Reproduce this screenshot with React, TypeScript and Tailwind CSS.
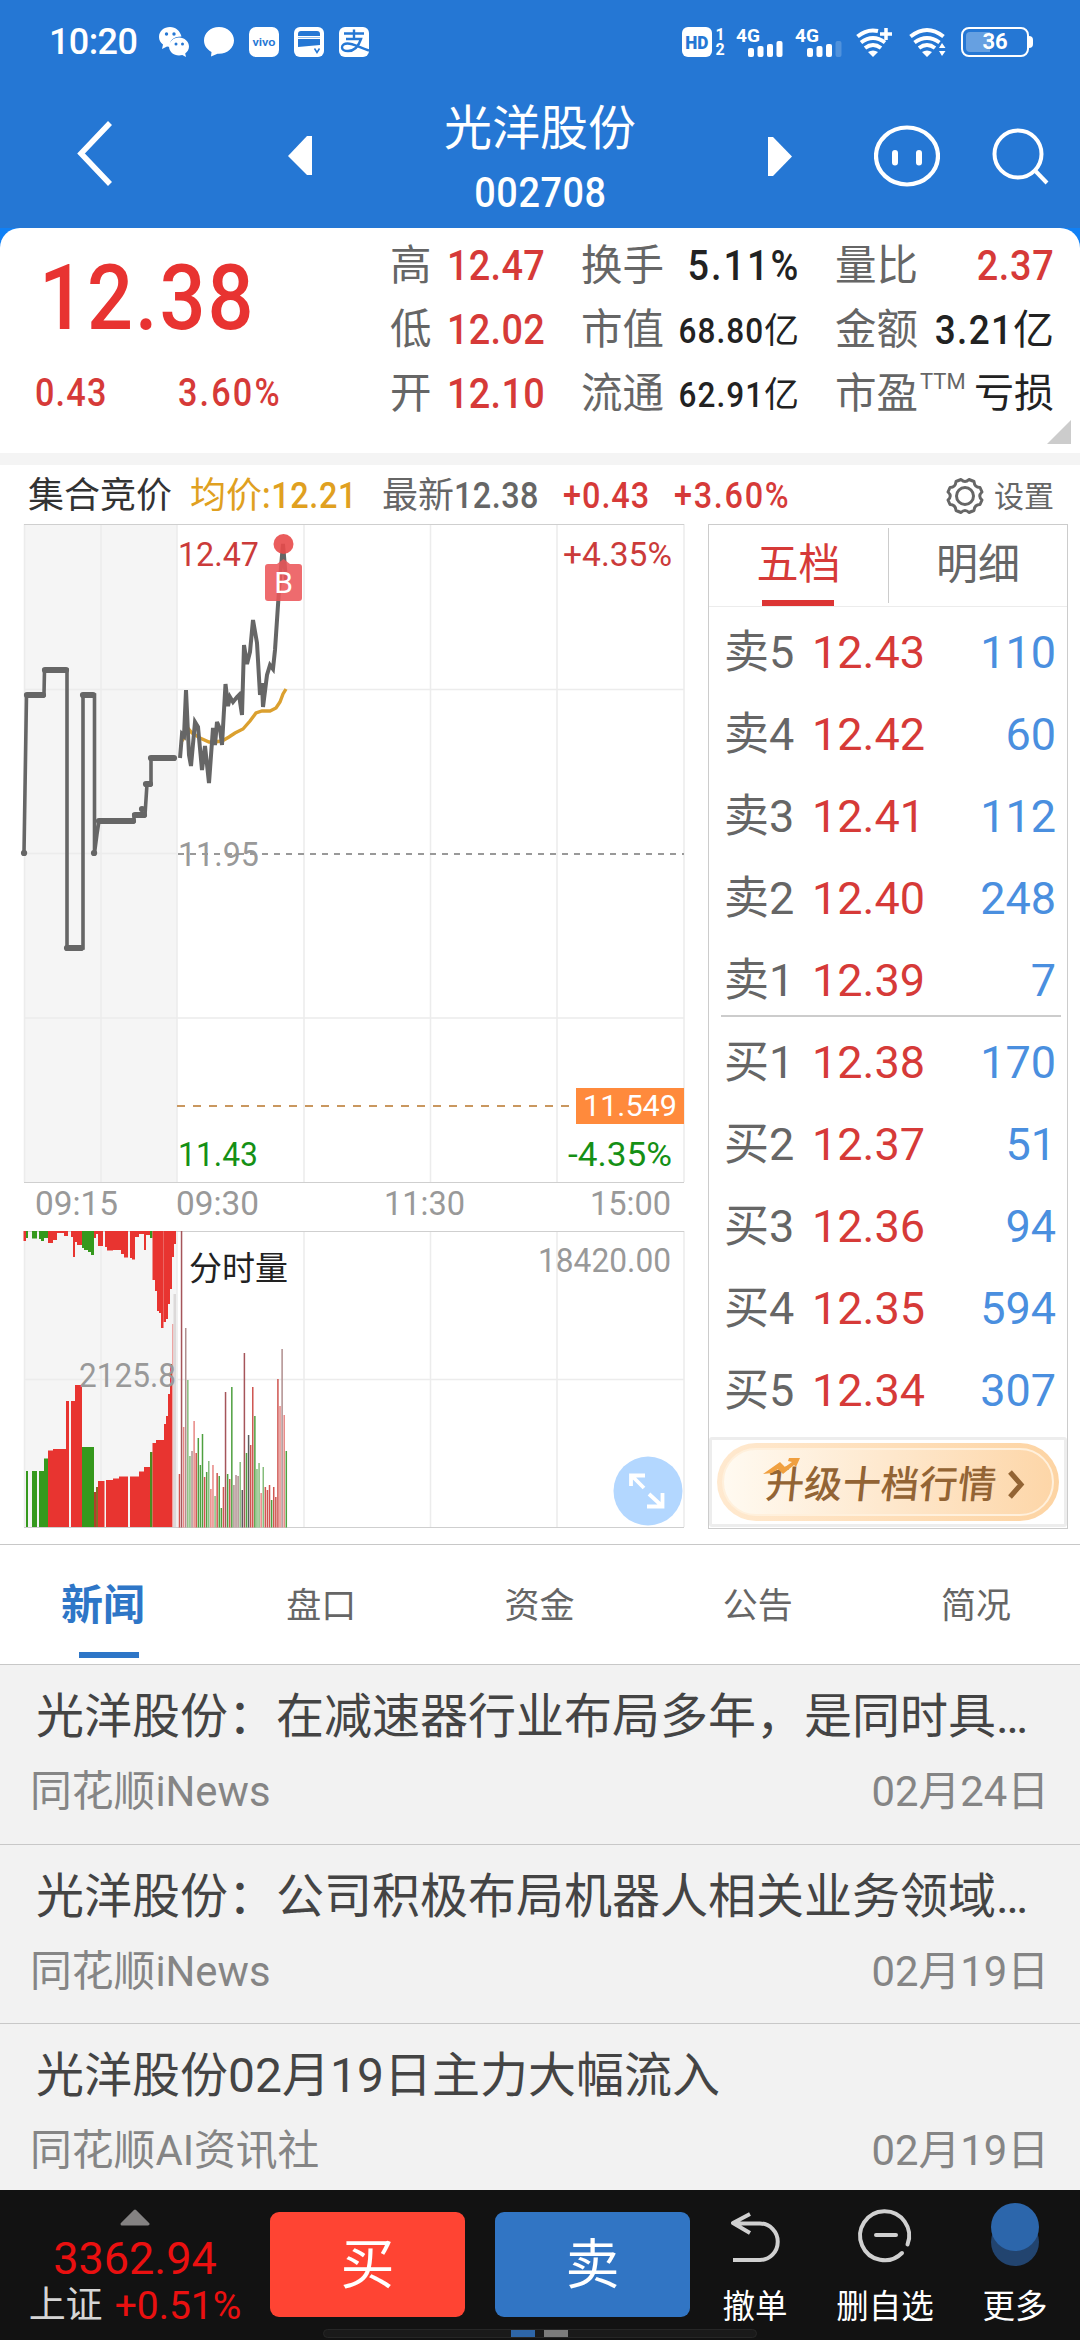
import { ReactNode } from "react";

const RED = "#e83430";
const GREEN = "#35991d";

const asks = [
    ["卖5", "12.43", "110"],
    ["卖4", "12.42", "60"],
    ["卖3", "12.41", "112"],
    ["卖2", "12.40", "248"],
    ["卖1", "12.39", "7"],
];

const bids = [
    ["买1", "12.38", "170"],
    ["买2", "12.37", "51"],
    ["买3", "12.36", "94"],
    ["买4", "12.35", "594"],
    ["买5", "12.34", "307"],
];

const news = [
    { title: "光洋股份：在减速器行业布局多年，是同时具…", source: "同花顺iNews", date: "02月24日" },
    { title: "光洋股份：公司积极布局机器人相关业务领域…", source: "同花顺iNews", date: "02月19日" },
    { title: "光洋股份02月19日主力大幅流入", source: "同花顺AI资讯社", date: "02月19日" },
];

// [x start, x end, y, colour]
type Bar = [number, number, number, string];

// matched volume during the call auction, grows from the bottom
const auctionMatched: Bar[] = [
    [26, 28, 1471, GREEN], [32, 37, 1471, GREEN], [39, 44, 1471, GREEN], [44, 48, 1458.5, GREEN],
    [48, 53, 1450.5, RED], [53, 66, 1449, RED], [66, 69, 1401, RED], [71, 75, 1401, RED], [75, 82, 1385, RED],
    [82, 94, 1447, GREEN], [94, 96, 1492, "#b0402a"], [96, 98, 1487, "#8a6a28"],
    [98, 104.5, 1481, RED], [106, 113, 1480, RED], [113, 119, 1478.5, RED], [119, 128, 1476.5, RED],
    [130, 139, 1476.5, RED], [139, 144, 1471.5, RED], [144, 150, 1467, RED], [150, 152.5, 1452, "#4d8a20"],
    [152.5, 156, 1443, RED], [156, 164, 1440, RED], [164, 166, 1424, RED], [166, 168, 1416, RED],
    [168, 170, 1394, RED], [170, 172, 1364, RED], [172, 173.5, 1324, "#eda5a3"], [173.5, 176, 1294, "#dcd9d9"],
];

// unmatched volume during the call auction, hangs from the top
const auctionUnmatched: Bar[] = [
    [23.5, 26, 1241, RED], [26, 28, 1238, GREEN], [32, 37, 1238.5, GREEN], [39, 41, 1239, GREEN],
    [41, 44, 1241, GREEN], [44, 48, 1238, GREEN], [48, 53, 1243, RED], [53, 57, 1240, RED], [57, 64, 1233, RED],
    [64, 68, 1236, RED], [71, 73, 1237, RED], [73, 75, 1257, RED], [75, 77, 1242, RED], [77, 82, 1245, RED],
    [82, 84, 1248, GREEN], [84, 88, 1250, GREEN], [88, 91, 1252, GREEN], [91, 94, 1255, GREEN],
    [94, 96, 1238, RED], [96, 98, 1234, RED], [98, 103, 1246, RED], [105, 107, 1247, RED], [107, 113, 1250.5, RED],
    [113, 121, 1250, RED], [121, 124, 1254, RED], [124, 128, 1257.5, RED], [130, 132, 1258, RED],
    [132, 135, 1259.5, RED], [135, 139, 1237, RED], [139, 144, 1234, RED], [144, 146, 1250, RED],
    [146, 150, 1235, RED], [150, 152.5, 1238, GREEN], [152.5, 155, 1280, RED], [155, 157, 1291, RED],
    [157, 159, 1311, RED], [159, 161, 1313, RED], [161, 163.5, 1328, RED], [163.5, 166, 1322, RED],
    [166, 168, 1319, RED], [168, 170, 1304, RED], [170, 172, 1289, RED], [172, 174, 1257, RED], [174, 176, 1244, RED],
];

const toneColors: Record<string, string> = {
    r: "#cf5550",
    d: "#a5555a",
    p: "#e88784",
    g: "#4fa040",
    l: "#86bd7c",
    s: "#b08f8f",
    k: "#5c5c5c",
};

// one bar per minute of the session: top edge and tone
const sessionVolume: [number, string][] = [
    [1474, "r"], [1231, "d"], [1427, "p"], [1328, "s"], [1380, "l"], [1456, "l"], [1451, "s"], [1421, "p"],
    [1453, "r"], [1438, "g"], [1465, "g"], [1434, "g"], [1477, "r"], [1472, "g"], [1461, "l"], [1489, "p"],
    [1465, "p"], [1496, "l"], [1473, "r"], [1476, "g"], [1508, "g"], [1487, "r"], [1392, "d"], [1474, "g"],
    [1479, "r"], [1387, "g"], [1485, "s"], [1475, "s"], [1476, "s"], [1462, "l"], [1490, "k"], [1353, "d"],
    [1453, "g"], [1435, "k"], [1445, "r"], [1387, "r"], [1416, "g"], [1469, "l"], [1463, "l"], [1493, "p"],
    [1467, "l"], [1487, "r"], [1490, "r"], [1485, "r"], [1500, "g"], [1487, "r"], [1497, "r"], [1379, "r"],
    [1406, "p"], [1349, "s"], [1415, "p"], [1451, "g"],
];

// narrow, widely spaced figures
function Num({ className = "", children }: { className?: string; children: ReactNode }) {
    return <span className={`inline-block scale-x-90 font-medium ${className}`}>{children}</span>;
}

function StatusBar() {
    return (
        <div className="flex h-[84px] items-center justify-between pl-[49px] pr-[47px] text-white">
            <div className="flex items-center gap-[15px]">
                <span className="mr-[6px] w-[89px] text-[36px] font-medium leading-none tracking-[-0.6px]">10:20</span>
                <svg width="30" height="30" viewBox="0 0 30 30" fill="#fff">
                    <path d="M11 0C5 0 0 4 0 10c0 3 1.500 5.500 4 7.500L3 22l5-2.500 3 .5C10 14 14 9.500 22.500 9.500 21 4 17 0 11 0z" />
                    <path d="M20 10.500c-5.500 0-10 4-10 9s4.500 9 10 9c1.200 0 2.300-.2 3.300-.5L27 30l-.8-3.500c2.300-1.700 3.800-4.200 3.800-7 0-5-4.500-9-10-9z" />
                    <g fill="#2577d4">
                        <circle cx="7.500" cy="7" r="1.700" />
                        <circle cx="15" cy="7" r="1.700" />
                        <circle cx="17" cy="17" r="1.500" />
                        <circle cx="23.500" cy="17" r="1.500" />
                    </g>
                </svg>
                <svg width="30" height="30" viewBox="0 0 30 30" fill="#fff">
                    <path d="M15 0C6.500 0 0 6 0 13.500c0 5 3 9 7.500 11.500L7 29.500l6.500-2.700C23 27.500 30 21 30 13.500S23.500 0 15 0z" />
                </svg>
                <div className="flex h-[30px] w-[30px] items-center justify-center rounded-[7px] bg-white text-[11px] font-semibold leading-none text-[#2577d4]">
                    <span className="scale-x-115">vivo</span>
                </div>
                <svg width="30" height="30" viewBox="0 0 30 30">
                    <rect width="30" height="30" rx="6" fill="#fff" />
                    <path d="M4 9V7q0-3 3-3h16q3 0 3 3v2z" fill="#2577d4" />
                    <path d="M4 12h22v6L4 20z" fill="#2577d4" />
                    <path d="M4 10.500h22" stroke="#9dc3ec" />
                    <path d="M20.500 21.500l2.500 4 2.500-4" fill="none" stroke="#2577d4" strokeWidth="1.500" />
                </svg>
                <svg width="30" height="30" viewBox="0 0 30 30" fill="none" stroke="#2577d4">
                    <rect width="30" height="30" rx="6" fill="#fff" stroke="none" />
                    <path d="M5 6.500h20M15 2.500v9M7 12h15c-2 6-6 12-13 12-4 0-6-1.500-6-3.500 0-2.500 2.500-4 5.500-4 5 0 9 2.500 21.500 7" strokeWidth="2.400" />
                </svg>
            </div>
            <div className="flex items-center">
                <div className="flex h-[30px] w-[30px] items-center justify-center rounded-[6px] bg-white text-[19px] font-black leading-none text-[#2577d4]">
                    <span className="scale-x-90">HD</span>
                </div>
                <div className="ml-[3px] flex w-[10px] flex-col items-center text-[16px] font-bold leading-[15px]">
                    <span>1</span>
                    <span>2</span>
                </div>
                <Signal last={1} />
                <Signal last={0.2} />
                <svg className="ml-[13px]" width="36" height="30" viewBox="0 0 36 30" fill="none" stroke="#fff" strokeWidth="4">
                    <path d="M1.500 9.500Q11 1.500 22 4M5 15.500q12-9 24 0M9 21q8-6 16 0" />
                    <path d="M30 1v12M24 7h12" strokeWidth="3.500" />
                    <path d="M12 25q5-3 10 0l-5 5z" fill="#fff" stroke="none" />
                </svg>
                <svg className="ml-[17px]" width="38" height="30" viewBox="0 0 38 30" fill="none" stroke="#fff" strokeWidth="4">
                    <path d="M1.500 9.500q16.500-13 33 0M5.500 15.500q12.500-9 25 0M10 21q8-6 16 0" />
                    <path d="M13 25q5-3 10 0l-5 5zM30 21l3-5 3.500 5zM30 24h6.500L33 29z" fill="#fff" stroke="none" />
                </svg>
                <div className="relative ml-[14px] flex h-[30px] w-[68px] items-center justify-center rounded-[8px] border-2 border-white">
                    <div className="absolute left-[3px] top-[3px] h-[20px] w-[24px] rounded-l-[4px] bg-white/30" />
                    <span className="relative text-[22px] font-bold leading-none">36</span>
                </div>
                <div className="h-3 w-1 rounded-r-sm bg-white" />
            </div>
        </div>
    );
}

function Signal({ last }: { last: number }) {
    return (
        <svg className="ml-[11px] overflow-visible" width="48" height="30" viewBox="0 0 48 30" fill="#fff">
            <text x="0" y="15" fontSize="19" fontWeight="700" textLength="24" lengthAdjust="spacingAndGlyphs">4G</text>
            <rect x="12" y="21" width="6" height="9" rx="2" />
            <rect x="21.500" y="19" width="6" height="11" rx="2" />
            <rect x="31" y="17" width="6" height="13" rx="2" />
            <rect x="40.500" y="14" width="6" height="16" rx="2" opacity={last} />
        </svg>
    );
}

function Header() {
    return (
        <div className="flex h-[144px] items-start text-white">
            <svg className="ml-[70px] mt-[35px]" width="50" height="70" viewBox="0 0 50 70" fill="none">
                <path d="M40 4L11 34.500 40 65" stroke="#fff" strokeWidth="5.500" />
            </svg>
            <svg className="ml-[168px] mt-[52px]" width="24" height="40" viewBox="0 0 24 40" fill="#fff">
                <path d="M24 0v39h-5L0 20 19 0z" />
            </svg>
            <div className="flex w-[456px] flex-col items-center">
                <h1 className="mt-[20px] text-[48px] leading-[50px]">光洋股份</h1>
                <Num className="mt-[18px] text-[42px] leading-[42px] tracking-[0.600px]">002708</Num>
            </div>
            <svg className="mt-[53px]" width="24" height="40" viewBox="0 0 24 40" fill="#fff">
                <path d="M0 0v39h5l19-19.500L5 0z" />
            </svg>
            <svg className="ml-[82px] mt-[39px]" width="66" height="66" viewBox="0 0 66 66" fill="none" stroke="#fff">
                <ellipse cx="33" cy="33" rx="31" ry="28.500" strokeWidth="4.200" />
                <path d="M21 30v9.500M45 30v9.500" strokeWidth="6" strokeLinecap="round" />
            </svg>
            <svg className="ml-[51px] mt-[42px]" width="60" height="60" viewBox="0 0 60 60" fill="none" stroke="#fff" strokeWidth="4">
                <circle cx="27" cy="28" r="23.500" />
                <path d="M43.500 44L56 57" />
            </svg>
        </div>
    );
}

function Stat({ label, sup, children }: { label: string; sup?: string; children: ReactNode }) {
    return (
        <div className="flex h-[64px] items-center justify-between whitespace-nowrap leading-none">
            <span className="flex text-[41.500px] text-[#666]">
                {label}
                {sup && <span className="-mr-4 ml-[2px] mt-[-2px] text-[22px]">{sup}</span>}
            </span>
            {children}
        </div>
    );
}

function QuoteCard() {
    return (
        <div className="relative flex h-[225px] rounded-t-[20px] bg-white">
            <div className="w-[390px] text-[#d63a38]">
                <Num className="ml-[39px] mt-[23px] origin-left text-[90px] leading-[96px] tracking-[2.200px] text-[#e83331]">12.38</Num>
                <div className="mt-[26px] flex pl-[35px] text-[38px] leading-[40px] tracking-[1.300px]">
                    <span className="w-[143px]"><Num className="origin-left">0.43</Num></span>
                    <Num className="origin-left tracking-[2.400px]">3.60%</Num>
                </div>
            </div>
            <div className="mt-[6px] w-[155px] text-[42px] text-[#d63a38]">
                <Stat label="高"><Num className="origin-right tracking-[0.400px]">12.47</Num></Stat>
                <Stat label="低"><Num className="origin-right tracking-[0.400px]">12.02</Num></Stat>
                <Stat label="开"><Num className="origin-right tracking-[0.400px]">12.10</Num></Stat>
            </div>
            <div className="ml-[36px] mt-[6px] w-[218px] text-[#222]">
                <Stat label="换手"><Num className="-mr-px origin-right text-[42px] tracking-[2.200px]">5.11%</Num></Stat>
                <Stat label="市值"><span className="mt-[3px] text-[35px]"><Num className="origin-right tracking-[1.200px]">68.80</Num>亿</span></Stat>
                <Stat label="流通"><span className="mt-[3px] text-[35px]"><Num className="origin-right tracking-[1.200px]">62.91</Num>亿</span></Stat>
            </div>
            <div className="ml-[36px] mt-[6px] w-[219px] text-[#222]">
                <Stat label="量比"><Num className="origin-right text-[42px] tracking-[0.800px] text-[#d63a38]">2.37</Num></Stat>
                <Stat label="金额"><span className="-ml-2 text-[41px]"><Num className="origin-right tracking-[1.500px]">3.21</Num>亿</span></Stat>
                <Stat label="市盈" sup="TTM"><span className="text-[40px]">亏损</span></Stat>
            </div>
            <svg className="absolute bottom-[9px] right-[9px]" width="24" height="24" viewBox="0 0 24 24">
                <path d="M24 0v24H0z" fill="#ccc" />
            </svg>
        </div>
    );
}

function InfoRow() {
    return (
        <div className="flex h-[59px] items-center whitespace-nowrap pt-[2px] text-[36px] leading-none">
            <span className="ml-[28px] w-[162px] text-[#333]">集合竞价</span>
            <span className="w-[192px] text-[#e0a020]">均价<Num className="origin-left tracking-[0.700px]">:12.21</Num></span>
            <span className="w-[181px] text-[#666]">最新<Num className="origin-left tracking-[0.500px]">12.38</Num></span>
            <span className="w-[111px] text-[#d63a38]"><Num className="origin-left tracking-[1.100px]">+0.43</Num></span>
            <span className="w-[272px] text-[#d63a38]"><Num className="origin-left tracking-[1.900px]">+3.60%</Num></span>
            <svg width="38" height="38" viewBox="-19 -19 38 38" fill="none" stroke="#666" strokeWidth="3">
                <circle r="8.500" />
                <path d="M-4-16.500Q0-12.500 4-16.500L9-14.500Q9.500-8.500 15-8.500L17-4Q12.500 0 17 4L15 8.500Q9.500 8.500 9 14.500L4 16.500Q0 12.500-4 16.500L-9 14.500Q-9.500 8.500-15 8.500L-17 4Q-12.500 0-17-4L-15-8.500Q-9.500-8.500-9-14.500Z" strokeLinejoin="round" />
            </svg>
            <span className="ml-[10px] mt-[2px] text-[30px] text-[#666]">设置</span>
        </div>
    );
}

function PriceChart() {
    return (
        <svg className="block" width="708" height="1020" viewBox="0 524 708 1020">
            <rect x="24" y="524" width="153" height="658" fill="#f5f5f5" />
            <rect x="24" y="1231" width="153" height="296" fill="#f5f5f5" />
            <g stroke="#ececec" strokeWidth="1.500">
                <path d="M24.500 524V1182M101 524V1182M177 524V1182M304 524V1182M430.500 524V1182M557 524V1182M684 524V1182" />
                <path d="M24 689.500H684M24 853.500H177M24 1018H684" />
                <path d="M24.500 1231V1527M101 1231V1527M177 1231V1527M304 1231V1527M430.500 1231V1527M557 1231V1527M684 1231V1527M24 1379.500H684" />
            </g>
            <path d="M24 524.500H684M24 1182.500H684M24 1231.500H684M24 1527.500H684" stroke="#cfcfcf" />

            <path d="M178 854H684" stroke="#999" strokeWidth="2" strokeDasharray="6 6" />
            <path d="M177 1106H572" stroke="#c9975f" strokeWidth="2.200" strokeDasharray="8 8" />

            {/* call auction line */}
            <path d="M24 853L26.500 695H44L44.500 670H67V948H83V695H94.500V853L97 834 99 821H134V815H145L147 784H151V758H175" fill="none" stroke="#666" strokeWidth="3.600" />
            <path d="M24 853h.1M27 695H43M45 670H66M67 948H81M83 695H93M94 853h.1M99 821H133M135 815H144M142 809h.1M146 784H150M151 758H174" fill="none" stroke="#666" strokeWidth="6.200" strokeLinecap="round" />

            {/* average and price lines */}
            <path d="M181 742L184 738 187 727 192 733 200 738 209 742 214 742 222 741 229 737 235 733 243 729 250 721 256 713 262 711 270 711 276 708 280 702 283 694 286 689" fill="none" stroke="#dba02f" strokeWidth="3.400" />
            <path d="M180 758L182 734 184 736 186 690 189 755 191 766 195 722 198 727 202 770 205 746 209 783 213 728 215 745 217 722 220 729 222 745 225.500 684 228 706 230 697 233 702 237 697 239 695 242 715 244 645 247 664 250 652 253 620 257 643 260 695 262 683 263 707 267 675 270 665 273 669 275 650 279 590 283 544 286 580" fill="none" stroke="#666" strokeWidth="4" />

            <g fontSize="34" fill="#999">
                <text x="178" y="566" fill="#cb3b3a" textLength="81" lengthAdjust="spacingAndGlyphs">12.47</text>
                <text x="563" y="566" fill="#cb3b3a" textLength="109" lengthAdjust="spacingAndGlyphs">+4.35%</text>
                <text x="178" y="866" textLength="81" lengthAdjust="spacingAndGlyphs">11.95</text>
                <text x="178" y="1166" fill="#159015" textLength="80" lengthAdjust="spacingAndGlyphs">11.43</text>
                <text x="568" y="1166" fill="#159015" textLength="104" lengthAdjust="spacingAndGlyphs">-4.35%</text>
                <text x="35" y="1215" textLength="83" lengthAdjust="spacingAndGlyphs">09:15</text>
                <text x="176" y="1215" textLength="83" lengthAdjust="spacingAndGlyphs">09:30</text>
                <text x="384" y="1215" textLength="81" lengthAdjust="spacingAndGlyphs">11:30</text>
                <text x="590" y="1215" textLength="81" lengthAdjust="spacingAndGlyphs">15:00</text>
                <text x="538" y="1272" textLength="133" lengthAdjust="spacingAndGlyphs">18420.00</text>
                <text x="189" y="1280" fontSize="33" fill="#222">分时量</text>
            </g>

            <rect x="576" y="1088" width="108" height="36" fill="#ff8a3c" />
            <text x="583" y="1116" fontSize="30" fill="#fff" textLength="94" lengthAdjust="spacingAndGlyphs">11.549</text>

            {/* buy marker */}
            <circle cx="283.500" cy="544" r="10" fill="#e84a4a" fillOpacity="0.9" />
            <path d="M277 564l6.500-5 6.500 5z" fill="#ec5558" fillOpacity="0.85" />
            <rect x="265" y="564" width="37" height="37" rx="3" fill="#ec5558" fillOpacity="0.87" />
            <text x="283.500" y="593" fontSize="30" fill="#fff" textAnchor="middle">B</text>

            {auctionMatched.map(([x0, x1, y, color], i) => (
                <rect key={i} x={x0} y={y} width={x1 - x0} height={1527 - y} fill={color} />
            ))}
            {auctionUnmatched.map(([x0, x1, y, color], i) => (
                <rect key={i} x={x0} y={1231} width={x1 - x0} height={y - 1231} fill={color} />
            ))}
            {sessionVolume.map(([y, tone], i) => (
                <rect key={i} x={178.700 + i * 2.095} y={y} width="1.500" height={1527.500 - y} fill={toneColors[tone]} />
            ))}
            <text x="79" y="1387" fontSize="34" fill="#999" textLength="97" lengthAdjust="spacingAndGlyphs">2125.8</text>

            <circle cx="648" cy="1491" r="34.500" fill="#b3d7ff" />
            <path d="M631 1486V1475.500H645M632 1476L644 1488M649 1494L662 1506M647 1506.500H662.500V1493" fill="none" stroke="#fff" strokeWidth="3.800" />
        </svg>
    );
}

function BookRow({ row }: { row: string[] }) {
    return (
        <div className="flex h-[82px] items-center pl-[15px] pr-[11px] text-[45px] leading-none">
            <span className="w-[88px] text-[#666]">{row[0]}</span>
            <span className="text-[#d63a38]">{row[1]}</span>
            <span className="ml-auto text-[#4a8fdf]">{row[2]}</span>
        </div>
    );
}

function OrderBook() {
    return (
        <div className="h-[1005px] w-[360px] border border-[#ccc] bg-white">
            <div className="flex h-[82px] border-b border-[#ececec] text-[42px] leading-none">
                <div className="relative flex w-[179px] items-center justify-center pb-[2px] text-[#d63a38]">
                    五档
                    <div className="absolute bottom-0 left-[53px] h-[6px] w-[72px] bg-[#dc3534]" />
                </div>
                <div className="my-[3px] w-px bg-[#ccc]" />
                <div className="flex flex-1 items-center justify-center pb-[2px] text-[#666]">明细</div>
            </div>
            <div className="mt-[4px]">
                {asks.map((row) => <BookRow key={row[0]} row={row} />)}
                <div className="-mb-0.5 ml-3 mr-1.5 h-0.5 translate-y-[-6px] bg-[#ccc]" />
                {bids.map((row) => <BookRow key={row[0]} row={row} />)}
            </div>
            <div className="mt-[6px] h-[90px] rounded-[3px] border-[3px] border-[#ededed] px-[5px] py-[3px]">
                <div className="h-[78px] rounded-full bg-linear-to-r from-[#ffe9cf] to-[#fdd4a3] p-[5px]">
                    <div className="relative flex h-full items-center rounded-full border-2 border-[#fff0dc] bg-linear-to-r from-[#fffaf1] via-[#fee8cd] to-[#fdd6a8] pl-[42px] pt-[5px]">
                        <span className="-skew-x-6 text-[38px] font-medium leading-none tracking-[0.400px] text-[#936434]">升级十档行情</span>
                        <svg className="ml-[11px]" width="20" height="30" viewBox="0 0 20 30" fill="none">
                            <path d="M3 2l11 12.500L3 27" stroke="#936434" strokeWidth="5" />
                        </svg>
                        <svg className="absolute left-[39px] top-[8px]" width="38" height="18" viewBox="0 0 38 18" fill="#f0a040">
                            <path d="M0 16L17 4l5 5 7-5-4-1 1-3h11l-4 9-2-2-11 9-5-5-6 4z" />
                        </svg>
                    </div>
                </div>
            </div>
        </div>
    );
}

function Tabs() {
    return (
        <div className="relative h-[121px] border-b border-[#c8c8c8] border-t border-t-[#c8c8c8] bg-white">
            <div className="ml-[-6px] grid h-[118px] w-[1091px] grid-cols-5 place-items-center pt-[4px] text-[35px] leading-none text-[#666]">
                <span className="text-[42px] font-bold text-[#2e76c7]">新闻</span>
                <span>盘口</span>
                <span>资金</span>
                <span>公告</span>
                <span>简况</span>
            </div>
            <div className="absolute bottom-[6px] left-[79px] h-[6px] w-[60px] bg-[#2e76c7]" />
        </div>
    );
}

function BottomBar() {
    return (
        <div className="relative flex h-[150px] bg-[#121212] text-white">
            <div className="flex w-[270px] flex-col items-center leading-none text-[#ea1010]">
                <svg className="mt-[19px]" width="30" height="17" viewBox="0 0 30 17">
                    <path d="M2 15L15 2l13 13z" fill="#848282" stroke="#848282" strokeWidth="3" strokeLinejoin="round" />
                </svg>
                <div className="mt-[10px] text-[45px] leading-[46px]">3362.94</div>
                <div className="mt-px flex items-center whitespace-nowrap text-[39px] leading-[46px]">
                    <span className="text-[37px] text-[#d5d5d5]">上证</span>
                    <span className="ml-[12px]">+0.51%</span>
                </div>
            </div>
            <button className="mt-[22px] h-[105px] w-[195px] rounded-[9px] bg-[#ff4433] pt-[3px] text-[54px] leading-none">买</button>
            <button className="ml-[30px] mt-[22px] h-[105px] w-[195px] rounded-[9px] bg-[#3175c4] pt-[3px] text-[54px] leading-none">卖</button>
            <Action label="撤单" className="ml-[10px] w-[110px]">
                <path d="M22 14L5 23l17 10M6 23.500H32a17.500 18 0 0 1 0 36.500H5" transform="translate(3 -7)" strokeLinejoin="round" />
            </Action>
            <Action label="删自选" className="ml-[20px] w-[110px]">
                <path d="M51.500 37.500A24.500 24.500 0 1 0 46 46M20 28h20" transform="translate(1)" strokeLinecap="round" />
            </Action>
            <Action label="更多" className="ml-[20px] w-[110px]">
                <circle cx="30" cy="35" r="24" fill="#22446f" stroke="none" />
                <circle cx="30" cy="20" r="24" fill="#2c66ab" stroke="none" />
            </Action>
            <div className="absolute left-[323px] top-[139px] flex h-[9px] w-[434px] rounded-full border border-[#262626] bg-[#1a1a1a]">
                <div className="ml-[187px] w-6 bg-[#2e66a8]" />
                <div className="ml-[9px] w-6 bg-[#7c7c7c]" />
            </div>
        </div>
    );
}

function Action({ label, className, children }: { label: string; className: string; children: ReactNode }) {
    return (
        <div className={`flex flex-col items-center ${className}`}>
            <svg className="mt-[17px] overflow-visible" width="60" height="64" viewBox="0 0 60 64" fill="none" stroke="#d0d0d0" strokeWidth="4">
                {children}
            </svg>
            <span className="mt-[20px] whitespace-nowrap text-[32.500px] leading-none">{label}</span>
        </div>
    );
}

export default function App() {
    return (
        <div lang="zh-CN" className="h-[2340px] w-[1080px] overflow-hidden bg-white [font-family:Roboto,'Noto_Sans_CJK_SC',sans-serif]">
            <div className="bg-[#2577d4]">
                <StatusBar />
                <Header />
            </div>
            <div className="bg-[#1080f5]">
                <QuoteCard />
            </div>
            <div className="h-3 bg-[#f4f4f4]" />
            <InfoRow />
            <div className="flex h-[1020px]">
                <PriceChart />
                <OrderBook />
            </div>
            <Tabs />
            <div className="h-[525px] overflow-hidden bg-[#f2f2f2]">
                {news.map((item) => (
                    <div key={item.title} className="h-[179.500px] border-b border-[#c8c8c8] pt-[27px] leading-none">
                        <div className="whitespace-nowrap pl-[36px] text-[48px] leading-[50px] text-[#444]">{item.title}</div>
                        <div className="mt-[27px] flex justify-between pl-[30px] pr-[31px] text-[41.800px] leading-[46px] text-[#858585]">
                            <span>{item.source}</span>
                            <span>{item.date}</span>
                        </div>
                    </div>
                ))}
            </div>
            <BottomBar />
        </div>
    );
}
